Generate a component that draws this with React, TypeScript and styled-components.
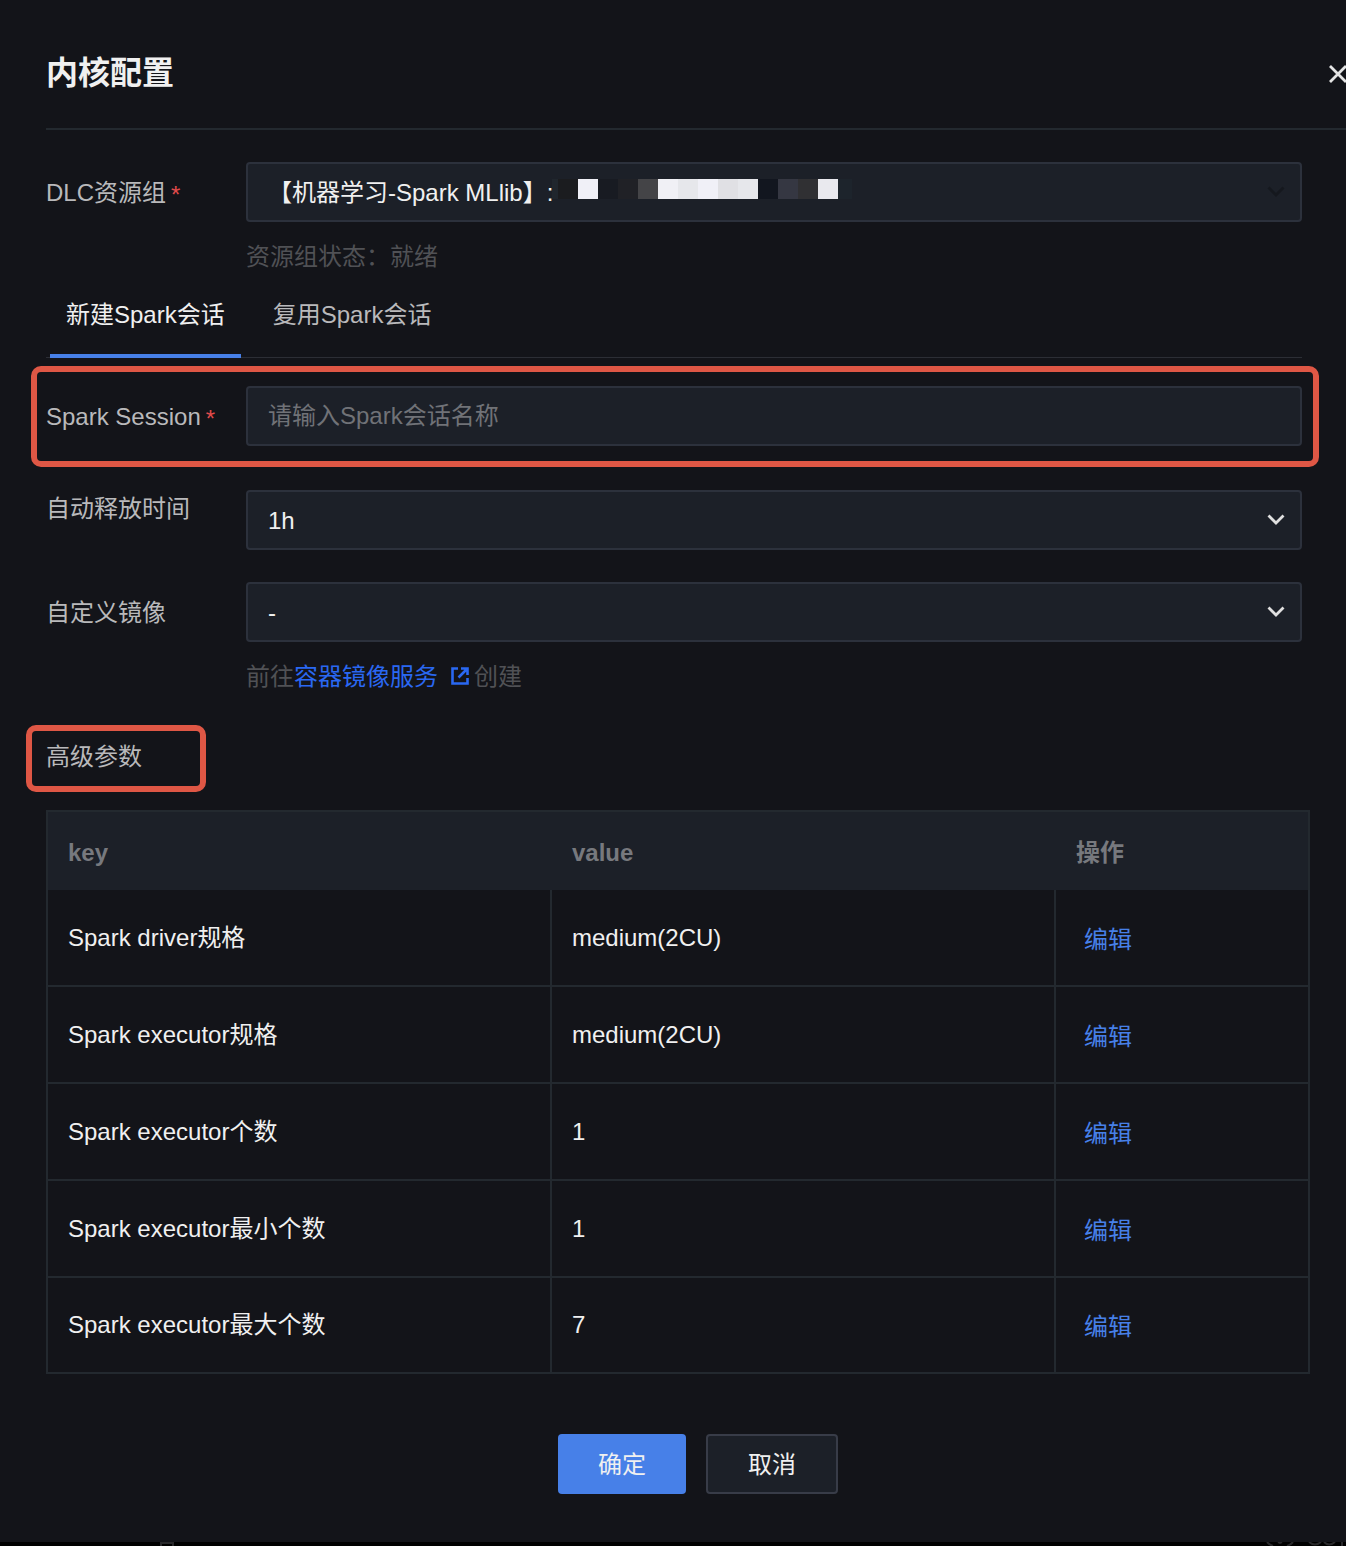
import React from "react";
import styled, { createGlobalStyle, css } from "styled-components";

const color = {
  panel: "#131419",
  field: "#1c2028",
  fieldBorder: "#2c313c",
  rule: "#23292f",
  text: "#f0f0f0",
  label: "#b9b9bb",
  muted: "#707277",
  hint: "#505155",
  primary: "#4780e8",
  link: "#2a68f2",
  mark: "#df5745",
  danger: "#e14b4b",
};

const GlobalStyle = createGlobalStyle`
  *, *::before, *::after { box-sizing: border-box; }
  body {
    margin: 0;
    background: #000;
    color: ${color.text};
    font-family: "Liberation Sans", "Noto Sans CJK SC", sans-serif;
    font-size: 24px;
    line-height: 36px;
    overflow-x: hidden;
  }
  button, input, select { font: inherit; color: inherit; }
`;

const Dialog = styled.section`
  background: ${color.panel};
  padding: 0 0 48px 46px;
`;

const Header = styled.header`
  display: flex;
  align-items: center;
  justify-content: space-between;
  padding: 49px 0 31px;
  border-bottom: 2px solid ${color.rule};
`;

const Title = styled.h1`
  margin: 0;
  font-size: 32px;
  line-height: 48px;
  font-weight: 700;
`;

const CloseButton = styled.button`
  display: flex;
  padding: 0;
  border: 0;
  background: none;
  color: #e4e4e4;
  cursor: pointer;
`;

const Body = styled.div`
  padding: 32px 36px 0 0;
`;

const Form = styled.form`
  display: flex;
  flex-direction: column;
  padding-right: 8px;
`;

const marked = css<{ $marked?: boolean }>`
  ${(p) =>
    p.$marked &&
    css`
      position: relative;
      &::after {
        content: "";
        position: absolute;
        border: 6px solid ${color.mark};
        border-radius: 10px;
        pointer-events: none;
      }
    `}
`;

const Row = styled.div<{ $gap: number; $marked?: boolean }>`
  display: grid;
  grid-template-columns: 200px minmax(0, 1fr);
  margin-bottom: ${(p) => p.$gap}px;
  ${marked}
  &::after {
    inset: -20px -17px -21px -15px;
  }
`;

const Label = styled.label<{ $top?: boolean }>`
  display: flex;
  align-items: center;
  height: ${(p) => (p.$top ? 36 : 60)}px;
  padding-top: 2px;
  gap: 5px;
  color: ${color.label};
`;

const Star = styled.span`
  padding-top: 4px;
  color: ${color.danger};
`;

const Field = styled.div`
  position: relative;
`;

const control = css`
  display: block;
  width: 100%;
  height: 60px;
  padding: 0 20px;
  border: 2px solid ${color.fieldBorder};
  border-radius: 4px;
  background: ${color.field};
  color: ${color.text};
  opacity: 1;
  outline: none;
`;

const Select = styled.select`
  ${control}
  padding-top: 2px;
  appearance: none;
`;

const Input = styled.input`
  ${control}
  &::placeholder {
    color: ${color.muted};
    opacity: 1;
  }
`;

const Chevron = styled.svg<{ $dim?: boolean }>`
  position: absolute;
  top: 24px;
  right: 17px;
  color: ${(p) => (p.$dim ? "#15181e" : "#e0e0e0")};
  pointer-events: none;
`;

const Mosaic = styled.div`
  position: absolute;
  top: 17px;
  left: 306px;
  display: flex;
  height: 20px;
  pointer-events: none;
`;

const Block = styled.span<{ $tone: string; $width?: number }>`
  width: ${(p) => p.$width ?? 20}px;
  background: ${(p) => p.$tone};
`;

const Hint = styled.p`
  display: flex;
  align-items: center;
  margin: 17px 0 0;
  color: ${color.hint};
`;

const HintLink = styled.a`
  display: inline-flex;
  align-items: center;
  gap: 12px;
  margin-right: 4px;
  color: ${color.link};
  text-decoration: none;
`;

const Tabs = styled.div`
  display: flex;
  gap: 16px;
  padding-left: 4px;
  margin-bottom: 28px;
  box-shadow: inset 0 -1px 0 #2c2e35;
`;

const Tab = styled.button<{ $active?: boolean }>`
  height: 62px;
  padding: 0 16px 20px;
  border: 0;
  border-bottom: 4px solid ${(p) => (p.$active ? color.primary : "transparent")};
  background: none;
  color: ${(p) => (p.$active ? color.text : color.label)};
  cursor: pointer;
`;

const SectionTitle = styled.h2<{ $marked?: boolean }>`
  width: 142px;
  margin: 0 0 35px;
  font-size: 24px;
  line-height: 36px;
  font-weight: 400;
  color: ${color.label};
  ${marked}
  &::after {
    inset: -14px -18px -17px -20px;
  }
`;

const Table = styled.table`
  width: 100%;
  table-layout: fixed;
  border: 2px solid ${color.rule};
  border-collapse: separate;
  border-spacing: 0;
`;

const HeadCell = styled.th<{ $share: number }>`
  width: ${(p) => p.$share}%;
  height: 78px;
  padding: 4px 20px 0;
  background: ${color.field};
  color: #77797e;
  text-align: left;
  font-weight: 700;
`;

const Cell = styled.td`
  height: 97px;
  padding: 0 20px;
  border-bottom: 2px solid ${color.rule};
  &:not(:last-child) {
    border-right: 2px solid ${color.rule};
  }
  tr:last-child > & {
    height: 94px;
    border-bottom: 0;
  }
`;

const EditButton = styled.button`
  padding: 4px 8px 0;
  border: 0;
  background: none;
  color: ${color.primary};
  cursor: pointer;
`;

const Footer = styled.footer`
  display: flex;
  justify-content: center;
  gap: 20px;
  padding: 60px 0 0 4px;
`;

const Button = styled.button<{ $primary?: boolean }>`
  height: 60px;
  padding: 2px 40px 0;
  border: ${(p) => (p.$primary ? "0" : "2px solid #383c48")};
  border-radius: 4px;
  background: ${(p) => (p.$primary ? color.primary : color.field)};
  cursor: pointer;
`;

const Backdrop = styled.div`
  display: flex;
  justify-content: space-between;
  height: 4px;
  padding-left: 160px;
  overflow: hidden;
  color: #29292b;
`;

const mosaic: [string, number?][] = [
  ["#20262d", 6],
  ["#1b1c1f"],
  ["#f0f0f7"],
  ["#181b22"],
  ["#202126"],
  ["#444447"],
  ["#f0f0f5"],
  ["#e6e7eb"],
  ["#f0f0f7"],
  ["#e0e0e4"],
  ["#e6e7eb"],
  ["#12161f"],
  ["#353742"],
  ["#303033"],
  ["#e9e9ee"],
  ["#1d242c", 14],
];

const params = [
  ["Spark driver规格", "medium(2CU)"],
  ["Spark executor规格", "medium(2CU)"],
  ["Spark executor个数", "1"],
  ["Spark executor最小个数", "1"],
  ["Spark executor最大个数", "7"],
];

function Arrow({ dim }: { dim?: boolean }) {
  return (
    <Chevron $dim={dim} width="18" height="12" viewBox="0 0 18 12" fill="none" aria-hidden="true">
      <path d="M1.5 1.5 9 9l7.5-7.5" stroke="currentColor" strokeWidth="2.8" />
    </Chevron>
  );
}

export default function App() {
  return (
    <>
      <GlobalStyle />
      <Dialog role="dialog" aria-labelledby="title" lang="zh-CN">
        <Header>
          <Title id="title">内核配置</Title>
          <CloseButton type="button" aria-label="关闭">
            <svg width="18" height="20" viewBox="0 0 18 20" fill="none">
              <path d="M2 3 18 19M18 3 2 19" stroke="currentColor" strokeWidth="2.8" />
            </svg>
          </CloseButton>
        </Header>

        <Body>
          <Form>
            <Row $gap={21}>
              <Label htmlFor="group">
                DLC资源组<Star>*</Star>
              </Label>
              <Field>
                <Select id="group" disabled>
                  <option>【机器学习-Spark MLlib】:</option>
                </Select>
                <Mosaic aria-hidden="true">
                  {mosaic.map(([tone, width], i) => (
                    <Block key={i} $tone={tone} $width={width} />
                  ))}
                </Mosaic>
                <Arrow dim />
                <Hint>资源组状态：就绪</Hint>
              </Field>
            </Row>

            <Tabs role="tablist">
              <Tab type="button" role="tab" aria-selected="true" $active>
                新建Spark会话
              </Tab>
              <Tab type="button" role="tab" aria-selected="false">
                复用Spark会话
              </Tab>
            </Tabs>

            <Row $gap={44} $marked>
              <Label htmlFor="session">
                Spark Session<Star>*</Star>
              </Label>
              <Input id="session" placeholder="请输入Spark会话名称" />
            </Row>

            <Row $gap={32}>
              <Label htmlFor="release" $top>
                自动释放时间
              </Label>
              <Field>
                <Select id="release">
                  <option>1h</option>
                </Select>
                <Arrow />
              </Field>
            </Row>

            <Row $gap={44}>
              <Label htmlFor="image">自定义镜像</Label>
              <Field>
                <Select id="image">
                  <option>-</option>
                </Select>
                <Arrow />
                <Hint>
                  前往
                  <HintLink href="#registry">
                    容器镜像服务
                    <svg width="20" height="20" viewBox="0 0 20 20" fill="none" aria-hidden="true">
                      <path
                        d="M8 1.500H2.500v15h15V11M11 1.500h6.500V8M17 2l-8.500 8.500"
                        stroke="currentColor"
                        strokeWidth="2.6"
                      />
                    </svg>
                  </HintLink>
                  创建
                </Hint>
              </Field>
            </Row>
          </Form>

          <SectionTitle id="advanced" $marked>
            高级参数
          </SectionTitle>
          <Table aria-labelledby="advanced">
            <thead>
              <tr>
                <HeadCell $share={40}>key</HeadCell>
                <HeadCell $share={40}>value</HeadCell>
                <HeadCell $share={20}>操作</HeadCell>
              </tr>
            </thead>
            <tbody>
              {params.map(([key, value]) => (
                <tr key={key}>
                  <Cell>{key}</Cell>
                  <Cell>{value}</Cell>
                  <Cell>
                    <EditButton type="button">编辑</EditButton>
                  </Cell>
                </tr>
              ))}
            </tbody>
          </Table>
        </Body>

        <Footer>
          <Button type="button" $primary>
            确定
          </Button>
          <Button type="button">取消</Button>
        </Footer>
      </Dialog>
      <Backdrop aria-hidden="true">
        <svg width="14" height="4" viewBox="0 0 14 4" fill="none">
          <path d="M1 4V1h12v3" stroke="currentColor" strokeWidth="2" />
        </svg>
        <svg width="82" height="4" viewBox="0 0 82 4" fill="none">
          <path
            d="M3 0q3 3 6 4M29 0q-3 3-6 4M14 0l2 1 2-1M45 0q6 5 12 0M60 0q5 5 11 0M78 0v4"
            stroke="currentColor"
            strokeWidth="2"
          />
        </svg>
      </Backdrop>
    </>
  );
}
